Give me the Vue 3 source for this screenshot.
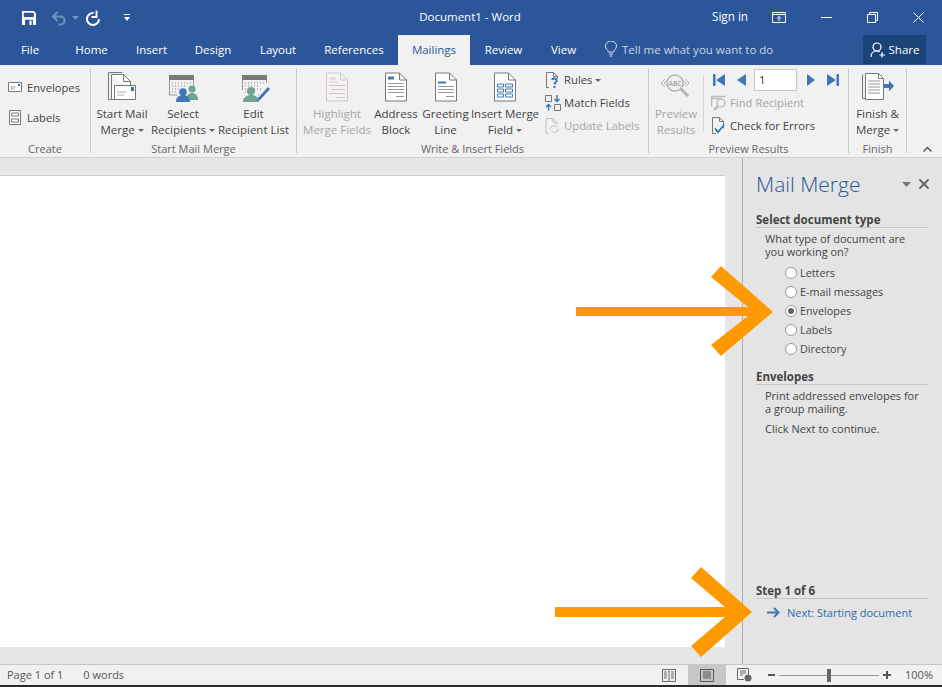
<template>
  <div class="word">
    <header class="titlebar">
      <div class="qat">
        <svg class="qat-save" width="14" height="14" viewBox="0 0 16 16"><path d="M0 0h13.500L16 2.500V16H0z" fill="#fff"/><path d="M2 2h11.500v5H2z" fill="#2b579a"/><path d="M3.500 10h9v6h-9z" fill="#2b579a"/><path d="M8.500 11h2.500v5H8.500z" fill="#fff"/></svg>
        <svg class="qat-undo" width="16" height="16" viewBox="0 0 16 16" fill="none" stroke="#7394c3" stroke-width="2"><path d="M2.500 6.500h7a4 4 0 0 1 0 8h-2"/><path d="M6.500 2 2 6.500 6.500 11"/></svg>
        <svg class="qat-caret" width="7" height="4" viewBox="0 0 7 4"><path d="M0 0h7L3.500 4z" fill="#7394c3"/></svg>
        <svg class="qat-redo" width="16" height="16" viewBox="0 0 16 16" fill="none" stroke="#fff" stroke-width="2"><path d="M8.500 3A6 6 0 1 0 14 9"/><path d="M11.500 .5v6.500h-5" stroke-width="1.800"/></svg>
        <svg class="qat-more" width="6" height="7" viewBox="0 0 6 7"><path d="M0 0h6v1H0z" fill="#fff"/><path d="M0 3h6L3 7z" fill="#fff"/></svg>
      </div>
      <div class="doc-title">Document1 - Word</div>
      <div class="win">
        <span class="sign-in">Sign in</span>
        <svg class="win-ribbon" width="14" height="11" viewBox="0 0 14 11" fill="none" stroke="#fff"><path d="M.5.500h13v10H.500z"/><path d="M.5 2.500h13"/><path d="M7 9V4.500M5 6.500l2-2 2 2"/></svg>
        <svg class="win-min" width="11" height="2" viewBox="0 0 11 2"><path d="M0 .5h11" stroke="#fff"/></svg>
        <svg class="win-max" width="11" height="11" viewBox="0 0 11 11" fill="none" stroke="#fff"><path d="M.5 2.500h8v8h-8z"/><path d="M2.500 2.500v-2h8v8h-2"/></svg>
        <svg class="win-close" width="11" height="11" viewBox="0 0 11 11" stroke="#fff"><path d="M.5.500l10 10M10.500.500l-10 10"/></svg>
      </div>
    </header>

    <nav class="tabs">
      <a v-for="t in tabs" :key="t.name" class="tab" :class="{ active: t.name === 'Mailings' }" :style="{ width: t.w + 'px' }">{{ t.name }}</a>
      <div class="tell">
        <svg width="12" height="16" viewBox="0 0 12 16" fill="none" stroke="#d5deeb"><path d="M3.500 11C3 9 .5 8 .5 5a5.500 5 0 0 1 11 0c0 3-2.500 4-3 6z"/><path d="M4 13h4M4.500 15h3"/></svg>
        <span>Tell me what you want to do</span>
      </div>
      <div class="share">
        <svg width="16" height="16" viewBox="0 0 16 16" fill="none" stroke="#fff" stroke-width="1.200"><circle cx="7" cy="5" r="4"/><path d="M1 15c0-4 2.500-6 6-6 1 0 2 .2 2.800.6"/><path d="M12 10v5.500M9.500 13h5.500"/></svg>
        <span>Share</span>
      </div>
    </nav>

    <section class="ribbon">
      <div class="group g-create">
        <div class="group-body">
          <div class="col col-tall">
            <div class="tall-row">
              <svg width="14" height="10" viewBox="0 0 14 10" fill="none"><path d="M.5.500h13v9H.500z" stroke="#777" fill="#fff"/><path d="M10 2h2v2h-2z" fill="#2e75b6"/><path d="M2.500 5h5M2.500 7h4" stroke="#999"/></svg>
              <span>Envelopes</span>
            </div>
            <div class="tall-row">
              <svg width="12" height="15" viewBox="0 0 12 15" fill="none" stroke="#777"><path d="M.5.500h11v14H.500z" fill="#fff"/><path d="M2.500 3h7v3h-7zM2.500 9h7v3h-7z"/></svg>
              <span>Labels</span>
            </div>
          </div>
        </div>
        <div class="group-label">Create</div>
      </div>

      <div class="group g-start">
        <div class="group-body">
          <div class="big" style="width: 56px">
            <svg class="ico" width="32" height="32" viewBox="0 0 32 32" fill="none" stroke="#777">
              <path d="M2.500 1.500h14M2.500 1.500v27h3"/>
              <path d="M5.500 3.500h12l7 7v8M5.500 3.500v25h3" fill="#fff"/>
              <path d="M17.500 3.500v7h7"/>
              <path d="M8.500 14.500h21v14h-21z" fill="#fff"/>
              <path d="M25 16h3v4h-3z" fill="#2e75b6" stroke="none"/>
              <path d="M11 21h9M11 24h7" stroke="#aaa"/>
            </svg>
            <div class="big-text">Start Mail<br>Merge<i class="caret"></i></div>
          </div>
          <div class="big" style="width: 66px">
            <svg class="ico" width="32" height="32" viewBox="0 0 32 32" fill="none">
              <path d="M2 4h25v5H2z" fill="#7a7a7a"/>
              <path d="M2.500 9v15h8M26.500 9v7" stroke="#999"/>
              <path d="M5 12h20M5 15h14M5 18h9M5 21h6" stroke="#888" stroke-dasharray="1 2"/>
              <circle cx="25" cy="18" r="3.500" fill="#6fa58f"/>
              <path d="M19 29c0-5 3-7 6-7s6 2 6 7z" fill="#6fa58f"/>
              <circle cx="16" cy="21" r="3.800" fill="#3f78b5"/>
              <path d="M9 31c0-5 3-7 7-7s7 2 7 7z" fill="#3f78b5"/>
            </svg>
            <div class="big-text">Select<br>Recipients<i class="caret"></i></div>
          </div>
          <div class="big" style="width: 75px">
            <svg class="ico" width="32" height="32" viewBox="0 0 32 32" fill="none">
              <path d="M4 4h25v5H4z" fill="#7a7a7a"/>
              <path d="M4.500 9v10M28.500 9v3" stroke="#999"/>
              <path d="M7 12h20M7 15h14M7 18h18M7 21h4M20 24h2" stroke="#888" stroke-dasharray="1 2"/>
              <circle cx="13" cy="20" r="4" fill="#6fa58f"/>
              <path d="M5 31c0-5 4-7 8-7s8 2 8 7z" fill="#6fa58f"/>
              <path d="M20 27l10-11 2 2-10 11-3 1z" fill="#3f78b5"/>
            </svg>
            <div class="big-text">Edit<br>Recipient List</div>
          </div>
        </div>
        <div class="group-label">Start Mail Merge</div>
      </div>

      <div class="group g-write">
        <div class="group-body">
          <div class="big disabled" style="width: 68px">
            <svg class="ico" width="22" height="29" viewBox="0 0 22 29" fill="none" stroke="#cdc6cc">
              <path d="M.5.500h14l7 7v21H.500z" fill="#f6f1f5"/><path d="M14.500.5v7h7"/>
              <path d="M3 5h7v2H3zM3 9h9v1H3z" fill="#e0d3dc" stroke="none"/>
              <path d="M3 13h16M6 17h13M3 21h16M10 25h9"/>
            </svg>
            <div class="big-text">Highlight<br>Merge Fields</div>
          </div>
          <div class="big" style="width: 50px">
            <svg class="ico" width="22" height="29" viewBox="0 0 22 29" fill="none" stroke="#777">
              <path d="M.5.500h14l7 7v21H.500z" fill="#fff"/><path d="M14.500.5v7h7"/>
              <path d="M3 4h6v3H3z" fill="#3f78b5" stroke="none"/>
              <path d="M3 11h16M3 14h16M3 17h16M3 20h16M11 24h8" stroke="#999"/>
            </svg>
            <div class="big-text">Address<br>Block</div>
          </div>
          <div class="big" style="width: 49px">
            <svg class="ico" width="22" height="29" viewBox="0 0 22 29" fill="none" stroke="#777">
              <path d="M.5.500h14l7 7v21H.500z" fill="#fff"/><path d="M14.500.5v7h7"/>
              <path d="M3 9h8v2H3z" fill="#3f78b5" stroke="none"/>
              <path d="M3 14h16M3 17h16M3 20h16M11 24h8" stroke="#999"/>
            </svg>
            <div class="big-text">Greeting<br>Line</div>
          </div>
          <div class="big" style="width: 70px">
            <svg class="ico" width="22" height="29" viewBox="0 0 22 29" fill="none" stroke="#777">
              <path d="M.5.500h14l7 7v21H.500z" fill="#fff"/><path d="M14.500.5v7h7"/>
              <path d="M3.500 11.500h6v3h-6zM11.500 11.500h7v3h-7zM3.500 16.500h6v3h-6zM11.500 16.500h7v3h-7zM3.500 21.500h6v3h-6zM11.500 21.500h7v3h-7z" stroke="#3f78b5"/>
            </svg>
            <div class="big-text">Insert Merge<br>Field<i class="caret"></i></div>
          </div>
          <div class="col col-write">
            <div class="row">
              <svg width="14" height="16" viewBox="0 0 14 16" fill="none"><path d="M3 15.500H.5V.5h7l4 4v2M7.500.5v4h4" stroke="#777"/><path d="M6 8c.6-2 5-2 4.700.6C10.500 10 8.500 10 8.500 12.500" stroke="#2e75b6" stroke-width="2"/><path d="M7.500 14h2v2h-2z" fill="#2e75b6"/></svg>
              <span>Rules<i class="caret"></i></span>
            </div>
            <div class="row">
              <svg width="16" height="16" viewBox="0 0 16 16" fill="none"><path d="M.5.500h6v6h-6zM9.500 9.500h6v6h-6z" stroke="#777"/><path d="M12 0v6M9.500 4l2.500 2.500L14.500 4" stroke="#2e75b6" stroke-width="1.400"/><path d="M3.500 15.500V10M1 12l2.500-2.500L6 12" stroke="#2e75b6" stroke-width="1.400"/></svg>
              <span>Match Fields</span>
            </div>
            <div class="row disabled">
              <svg width="15" height="16" viewBox="0 0 15 16" fill="none" stroke="#c2c2c2"><path d="M3 15.500H.5V.5h7l4 4v2M7.500.5v4h4"/><path d="M5 11a4 4 0 0 1 7-2M13 11a4 4 0 0 1-7 2"/></svg>
              <span>Update Labels</span>
            </div>
          </div>
        </div>
        <div class="group-label">Write &amp; Insert Fields</div>
      </div>

      <div class="group g-preview">
        <div class="group-body">
          <div class="big disabled preview-btn">
            <svg class="ico" width="32" height="30" viewBox="0 0 32 30" fill="none" stroke="#b5b5b5">
              <circle cx="15" cy="11" r="8" stroke-width="1.500"/>
              <path d="M21 17l7 7" stroke-width="3"/>
              <path d="M5 7l-4 4 4 4M8 7l-4 4 4 4M25 7l4 4-4 4M22 7l4 4-4 4"/>
              <text x="15" y="13.500" text-anchor="middle" font-size="6.500" font-weight="700" fill="#aaa" stroke="none">ABC</text>
            </svg>
            <div class="big-text">Preview<br>Results</div>
          </div>
          <div class="col col-nav">
            <div class="nav-row">
              <svg class="nav-first" width="12" height="12" viewBox="0 0 12 12" fill="#3f78b5"><path d="M0 0h2.500v12H0zM12 0v12L3 6z"/></svg>
              <svg class="nav-prev" width="9" height="12" viewBox="0 0 9 12" fill="#3f78b5"><path d="M9 0v12L0 6z"/></svg>
              <div class="nav-input">1</div>
              <svg class="nav-next" width="8" height="12" viewBox="0 0 8 12" fill="#3f78b5"><path d="M0 0v12l8-6z"/></svg>
              <svg class="nav-last" width="12" height="12" viewBox="0 0 12 12" fill="#3f78b5"><path d="M9.500 0H12v12H9.500zM0 0v12l9-6z"/></svg>
            </div>
            <div class="row disabled">
              <svg width="16" height="16" viewBox="0 0 16 16" fill="none" stroke="#bdbdbd"><path d="M.5 12V1.500h14M.5 3.500h10" stroke-width="1.500"/><circle cx="10" cy="8" r="4" stroke-width="1.500"/><path d="M7 11l-4 4" stroke-width="2.500"/></svg>
              <span>Find Recipient</span>
            </div>
            <div class="row">
              <svg width="14" height="17" viewBox="0 0 14 17" fill="none"><path d="M4 16.500H.5V.5h7l4 4v7M7.500.5v4h4" stroke="#777"/><path d="M3 11.500l3 3.500 6-7" stroke="#2e75b6" stroke-width="1.800"/></svg>
              <span>Check for Errors</span>
            </div>
          </div>
        </div>
        <div class="group-label">Preview Results</div>
      </div>

      <div class="group g-finish">
        <div class="group-body">
          <div class="big" style="width: 57px">
            <svg class="ico" width="32" height="28" viewBox="0 0 32 28" fill="none" stroke="#777">
              <path d="M.5 1.500v24h3"/>
              <path d="M3.500.5h13l5 5v21h-18z" fill="#fff"/><path d="M16.500.5v5h5"/>
              <path d="M6 8h12M6 11h12M6 14h12M6 17h12M6 20h12" stroke="#999"/>
              <path d="M22 11h5V7.500l5 5.500-5 5.500V15h-5z" fill="#3f78b5" stroke="none"/>
            </svg>
            <div class="big-text">Finish &amp;<br>Merge<i class="caret"></i></div>
          </div>
        </div>
        <div class="group-label">Finish</div>
      </div>

      <svg class="collapse" width="9" height="6" viewBox="0 0 9 6" fill="none" stroke="#555" stroke-width="1.500"><path d="M.5 5.500l4-4 4 4"/></svg>
    </section>

    <main class="workspace">
      <div class="doc-area">
        <div class="page"></div>
      </div>
      <aside class="pane">
        <div class="pane-head">
          <h2>Mail Merge</h2>
          <svg width="9" height="5" viewBox="0 0 9 5"><path d="M0 0h9L4.500 5z" fill="#777"/></svg>
          <svg class="pane-close" width="10" height="10" viewBox="0 0 10 10" stroke="#666" stroke-width="2"><path d="M.5.500l9 9M9.500.500l-9 9"/></svg>
        </div>
        <h3 class="pane-h">Select document type</h3>
        <p class="pane-p">What type of document are<br>you working on?</p>
        <ul class="radios">
          <li v-for="r in docTypes" :key="r" class="radio-row">
            <span class="radio" :class="{ checked: r === 'Envelopes' }"></span>{{ r }}
          </li>
        </ul>
        <h3 class="pane-h pane-h-env">Envelopes</h3>
        <p class="pane-p">Print addressed envelopes for<br>a group mailing.</p>
        <p class="pane-p pane-next">Click Next to continue.</p>
        <div class="pane-foot">
          <h3 class="pane-h">Step 1 of 6</h3>
          <a class="next-link">
            <svg width="13" height="11" viewBox="0 0 13 11" fill="none" stroke="#3f78b5" stroke-width="2"><path d="M0 5.500h11.500M7 1l4.500 4.500L7 10"/></svg>
            Next: Starting document
          </a>
        </div>
      </aside>
    </main>

    <footer class="status">
      <span class="st-page">Page 1 of 1</span>
      <span class="st-words">0 words</span>
      <div class="st-right">
        <svg class="st-read" width="14" height="13" viewBox="0 0 14 13" fill="none" stroke="#666"><path d="M.5.500h6l.5.500.5-.5h6v12h-6L7 12l-.5.500h-6z"/><path d="M7 1v11M2 3h3M2 5h3M2 7h3M2 9h3M9 3h3M9 5h3M9 7h3M9 9h3"/></svg>
        <div class="st-print">
          <svg width="14" height="13" viewBox="0 0 14 13" fill="none" stroke="#555"><path d="M.5.500h13v12H.500z"/><path d="M3 3h8M3 5h8M3 7h8M3 9h8" /></svg>
        </div>
        <svg class="st-web" width="15" height="14" viewBox="0 0 15 14" fill="none" stroke="#666"><path d="M7 11.500H.5V.5h11v6"/><path d="M3 3h6M3 5h6M3 7h3"/><circle cx="11" cy="10" r="3.500" fill="#666" stroke="none"/></svg>
        <span class="zoom-sign minus"></span>
        <div class="slider"><span class="thumb"></span></div>
        <span class="zoom-sign plus"></span>
        <span class="st-zoom">100%</span>
      </div>
    </footer>
    <div class="edge"></div>

    <svg class="arrows" width="942" height="687" viewBox="0 0 942 687">
      <polygon fill="#ff9900" points="576,307 748,307 711,277 721,266 773,312 721,356 711,345 748,316 576,316"/>
      <polygon fill="#ff9900" points="555,607 725,607 691,578 701,567 752,612 701,657 691,646 725,617 555,617"/>
    </svg>
  </div>
</template>

<script setup>
const tabs = [
  { name: "File", w: 60 },
  { name: "Home", w: 63 },
  { name: "Insert", w: 57 },
  { name: "Design", w: 66 },
  { name: "Layout", w: 64 },
  { name: "References", w: 88 },
  { name: "Mailings", w: 72 },
  { name: "Review", w: 67 },
  { name: "View", w: 53 }
];

const docTypes = ["Letters", "E-mail messages", "Envelopes", "Labels", "Directory"];
</script>

<style>
html,
body {
  margin: 0;
  background: #e6e6e6;
}
</style>

<style scoped>
.word {
  position: relative;
  width: 942px;
  height: 687px;
  overflow: hidden;
  display: flex;
  flex-direction: column;
  font-family: "Open Sans", "Noto Sans", "Liberation Sans", sans-serif;
  font-size: 11.5px;
  color: #444;
}

.titlebar {
  height: 35px;
  flex-shrink: 0;
  display: grid;
  grid-template-columns: 1fr auto 1fr;
  align-items: center;
  background: #2b579a;
  color: #fff;
}

.qat {
  display: flex;
  align-items: center;
  padding-left: 22px;
}

.qat-undo {
  margin-left: 15px;
}

.qat-caret {
  margin-left: 5px;
}

.qat-redo {
  margin-left: 6px;
}

.qat-more {
  margin-left: 23px;
}

.doc-title {
  font-size: 11.5px;
  padding-bottom: 3px;
  transform: translateX(-1px);
}

.win {
  display: flex;
  align-items: center;
  justify-content: flex-end;
  padding-right: 18px;
}

.sign-in {
  font-size: 11.7px;
  padding-bottom: 3px;
}

.win-ribbon {
  margin-left: 24px;
}

.win-min {
  margin-left: 35px;
}

.win-max {
  margin-left: 35px;
}

.win-close {
  margin-left: 35px;
}

.tabs {
  height: 30px;
  flex-shrink: 0;
  display: flex;
  align-items: stretch;
  background: #2b579a;
  color: #fff;
}

.tab {
  display: flex;
  align-items: center;
  justify-content: center;
  padding-bottom: 2px;
  box-sizing: border-box;
  font-size: 11.5px;
}

.tab.active {
  background: #f1f1f1;
  color: #2b579a;
}

.tell {
  display: flex;
  align-items: center;
  gap: 5px;
  margin-left: 15px;
  padding-bottom: 2px;
  color: #c9d5e6;
  font-size: 11.5px;
}

.share {
  position: absolute;
  top: 35px;
  left: 863px;
  width: 63px;
  height: 29px;
  display: flex;
  align-items: center;
  justify-content: center;
  gap: 3px;
  background: #1a4478;
  font-size: 11.5px;
}

.ribbon {
  position: relative;
  height: 93px;
  flex-shrink: 0;
  box-sizing: border-box;
  display: flex;
  padding-top: 4px;
  background: #f1f1f1;
  border-bottom: 1px solid #d0d0d0;
}

.group {
  height: 84px;
  box-sizing: border-box;
  display: flex;
  flex-direction: column;
  border-right: 1px solid #c8c8c8;
}

.group-body {
  flex: 1;
  display: flex;
  min-height: 0;
}

.group-label {
  height: 16px;
  margin-bottom: -4px;
  line-height: 16px;
  text-align: center;
  font-size: 11px;
  color: #666;
}

.g-create {
  width: 91px;
}

.g-start {
  width: 206px;
  padding-left: 3px;
}

.g-start .group-label {
  margin-left: -3px;
}

.g-write {
  width: 352px;
  padding-left: 6px;
}

.g-write .group-label {
  margin-left: -6px;
}

.g-preview {
  width: 200px;
}

.g-finish {
  width: 58px;
}

.big {
  display: flex;
  flex-direction: column;
  align-items: center;
  flex-shrink: 0;
  padding-top: 2px;
}

.ico {
  display: block;
  height: 32px;
  margin-bottom: 3px;
}

.big-text {
  text-align: center;
  line-height: 16px;
  white-space: nowrap;
  font-size: 11.5px;
}

.disabled,
.disabled .big-text {
  color: #a6a6a6;
}

.caret {
  display: inline-block;
  margin-left: 3px;
  vertical-align: middle;
  border-left: 3px solid transparent;
  border-right: 3px solid transparent;
  border-top: 3px solid #666;
}

.col-tall {
  padding: 3px 0 0 8px;
}

.tall-row {
  height: 30px;
  display: flex;
  align-items: center;
  gap: 5px;
  white-space: nowrap;
  font-size: 11.2px;
}

.tall-row svg {
  width: 14px;
}

.col-write {
  margin-left: 5px;
  margin-top: -1px;
}

.row {
  height: 23px;
  display: flex;
  align-items: center;
  gap: 3px;
  white-space: nowrap;
  font-size: 11.3px;
}

.row svg {
  width: 16px;
  flex-shrink: 0;
}

.preview-btn {
  width: 54px;
}

.col-nav {
  padding-left: 8px;
  position: relative;
}

.col-nav::before {
  content: "";
  position: absolute;
  left: 0;
  top: 6px;
  height: 56px;
  border-left: 1px solid #d4d4d4;
}

.nav-row {
  height: 22px;
  display: flex;
  align-items: center;
  padding-left: 2px;
}

.nav-prev {
  margin-left: 12px;
}

.nav-input {
  box-sizing: border-box;
  width: 43px;
  height: 22px;
  margin-left: 8px;
  padding-left: 4px;
  line-height: 20px;
  background: #fff;
  border: 1px solid #c6c6c6;
  font-size: 11.5px;
  color: #333;
}

.nav-next {
  margin-left: 10px;
}

.nav-last {
  margin-left: 12px;
}

.collapse {
  position: absolute;
  right: 10px;
  bottom: 5px;
}

.workspace {
  flex: 1;
  min-height: 0;
  display: flex;
  background: #e6e6e6;
}

.doc-area {
  width: 743px;
  box-sizing: border-box;
  padding: 17px 17px 17px 0;
  border-right: 1px solid #aeaeae;
}

.page {
  height: 100%;
  background: #fff;
  border-top: 1px solid #d0d0d0;
  box-sizing: border-box;
}

.pane {
  flex: 1;
  min-width: 0;
  display: flex;
  flex-direction: column;
  padding: 11px 14px 0 13px;
  background: #e4e4e4;
}

.pane-head {
  display: flex;
  align-items: center;
  height: 30px;
  margin-bottom: 13px;
}

.pane-head h2 {
  flex: 1;
  margin: 0;
  font-size: 21px;
  font-weight: 300;
  color: #2b579a;
}

.pane-close {
  margin-left: 8px;
  margin-right: -1px;
}

.pane-h {
  margin: 0;
  height: 15px;
  line-height: 15px;
  font-size: 11.5px;
  font-weight: 700;
  color: #444;
  border-bottom: 1px solid #c4c4c4;
}

.pane-h-env {
  margin-top: 11px;
}

.pane-p {
  margin: 4px 0 0 9px;
  font-size: 11px;
  line-height: 13px;
  color: #444;
}

.pane-next {
  margin-top: 7px;
}

.radios {
  list-style: none;
  margin: 5px 0 0;
  padding: 0 0 0 29px;
}

.radio-row {
  height: 19px;
  display: flex;
  align-items: center;
  gap: 3px;
  font-size: 10.8px;
  color: #444;
}

.radio {
  box-sizing: border-box;
  width: 12px;
  height: 12px;
  border: 1px solid #999;
  border-radius: 50%;
  background: #fff;
  display: flex;
  align-items: center;
  justify-content: center;
}

.radio.checked::after {
  content: "";
  width: 6px;
  height: 6px;
  border-radius: 50%;
  background: #666;
}

.pane-foot {
  margin-top: auto;
  margin-bottom: 44px;
}

.next-link {
  display: flex;
  align-items: center;
  gap: 7px;
  margin: 6px 0 0 11px;
  font-size: 11px;
  color: #2f6aa8;
}

.status {
  height: 21px;
  flex-shrink: 0;
  box-sizing: border-box;
  display: flex;
  align-items: center;
  background: #f1f1f1;
  border-top: 1px solid #c6c6c6;
  font-size: 11px;
  color: #555;
}

.st-page {
  margin-left: 7px;
  padding-bottom: 2px;
}

.st-words {
  margin-left: 20px;
  padding-bottom: 2px;
}

.st-right {
  margin-left: auto;
  height: 100%;
  display: flex;
  align-items: center;
}

.st-print {
  width: 38px;
  height: 100%;
  margin-left: 12px;
  display: flex;
  align-items: center;
  justify-content: center;
  background: #c6c6c6;
}

.st-web {
  margin-left: 11px;
}

.zoom-sign {
  position: relative;
  width: 7px;
  height: 2px;
  background: #555;
}

.minus {
  margin-left: 16px;
}

.plus {
  width: 8px;
  margin-left: 4px;
}

.plus::after {
  content: "";
  position: absolute;
  left: 3px;
  top: -3px;
  width: 2px;
  height: 8px;
  background: #555;
}

.slider {
  position: relative;
  width: 100px;
  height: 1px;
  margin-left: 4px;
  background: #999;
}

.thumb {
  position: absolute;
  left: 48px;
  top: -6px;
  width: 4px;
  height: 13px;
  background: #666;
}

.st-zoom {
  margin-left: 14px;
  margin-right: 9px;
  padding-bottom: 2px;
}

.edge {
  height: 2px;
  flex-shrink: 0;
  background: #2a2a2a;
}

.arrows {
  position: absolute;
  top: 0;
  left: 0;
  pointer-events: none;
}
</style>
